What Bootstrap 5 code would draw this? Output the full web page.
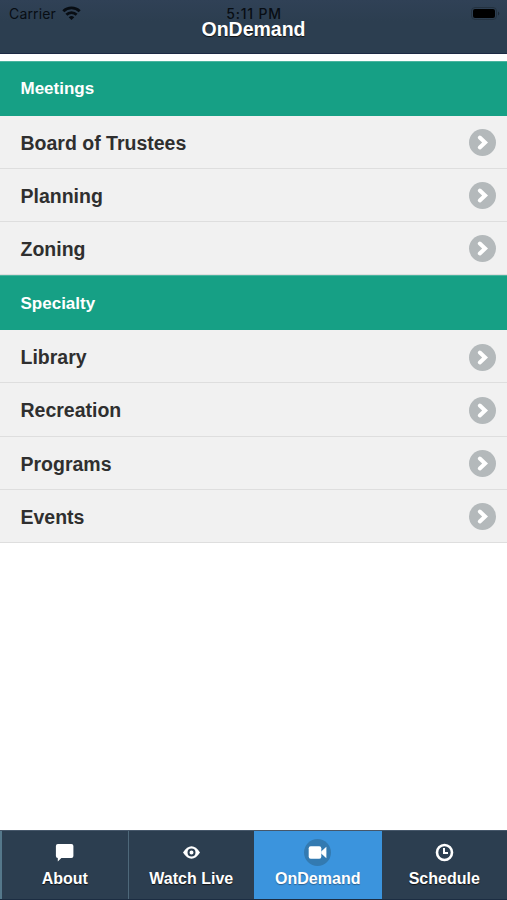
<!DOCTYPE html>
<html lang="en">
<head>
<meta charset="utf-8">
<meta name="viewport" content="width=device-width, initial-scale=1">
<title>OnDemand</title>
<link href="https://cdn.jsdelivr.net/npm/bootstrap@5.3.0/dist/css/bootstrap.min.css" rel="stylesheet">
<style>
body { font-family: "Liberation Sans", Arial, sans-serif; font-weight: 700; }
.app-header { height: 54px; background: linear-gradient(#304156, #2c3e50 40%); border-bottom: 1px solid #1d2a44; color: #fff; }
.status-bar { inset: 0 0 auto 0; height: 27px; padding: 0 7px 0 9px; font-family: Inter, "Liberation Sans", sans-serif; font-size: 14px; color: #080d13; }
.status-carrier { font-weight: 400; letter-spacing: .15px; }
.status-time { left: 1px; right: 0; font-weight: 500; letter-spacing: .8px; }
.wifi-icon { margin-left: 2px; }
.page-title { font-size: 19.5px; line-height: 22px; padding-top: 18px; text-shadow: 0 1px 1px #111; }
.section-list { margin-top: 6.5px; }
.section-heading { height: 55.2px; padding: 0 20.5px; background: #16a085; color: #fff; font-size: 17px; border-top: 1px solid #4ab49f; }
.section-row + .section-heading { padding-top: 1px; }
.section-row { height: 53.15px; padding: 1.6px 11px 0 20.5px; background: #f1f1f1; color: #2f2f2f; font-size: 19.5px; border-bottom: 1px solid #dedede; text-decoration: none; }
.section-row:hover { color: #2f2f2f; }
.section-row span { padding-top: 1.6px; }
.tab-bar { height: 70px; background: #2c3e50; border-top: 1px solid #46576a; border-bottom: 1px solid #1c2d42; }
.tab-item { color: #fff; font-size: 16px; line-height: 20px; padding-top: 8px; border-left: 1px solid #4e687a; text-decoration: none; text-shadow: 0 1px 1px #111; white-space: nowrap; }
.tab-item:first-child { border-left: 2px solid #55788b; }
.tab-item.active { background: #3b94dd; border-left-color: #3b94dd; text-shadow: 0 1px 1px #2b6090; }
.tab-item span { margin-top: 2.5px; }
.last-tab { border-left-color: #3b94dd; }
</style>
<script src="https://cdn.jsdelivr.net/npm/bootstrap@5.3.0/dist/js/bootstrap.bundle.min.js"></script>
</head>
<body class="vh-100 d-flex flex-column bg-white overflow-hidden">
<svg width="0" height="0" class="position-absolute" aria-hidden="true">
  <symbol id="chevron" viewBox="0 0 27 27"><circle cx="13.5" cy="13.5" r="13.5" fill="#b4b9bb"/><path d="M10.8 8.5l5.3 5-5.3 5" fill="none" stroke="#fff" stroke-width="4" stroke-linecap="round" stroke-linejoin="miter"/></symbol>
</svg>
<header class="app-header position-relative flex-shrink-0">
  <div class="status-bar position-absolute d-flex align-items-center justify-content-between">
    <div class="d-flex align-items-center gap-1">
      <span class="status-carrier">Carrier</span>
      <svg width="19" height="15" viewBox="0 0 19 15" class="wifi-icon"><g fill="none" stroke="#080d13" stroke-width="2.8"><path d="M1.3 5.3a11.7 11.7 0 0 1 16.4 0"/><path d="M4.4 8.8a7.2 7.2 0 0 1 10.2 0"/></g><path d="M6.7 11.3a4.1 4.1 0 0 1 5.6 0l-2.8 2.8z" fill="#080d13"/></svg>
    </div>
    <span class="status-time position-absolute text-center">5:11 PM</span>
    <svg width="29" height="13" viewBox="0 0 29 13"><rect x=".5" y=".5" width="25" height="12" rx="3.5" fill="none" stroke="#243240"/><rect x="2" y="2" width="22" height="9" rx="2" fill="#000"/><path d="M27 4.5a2.2 2.2 0 0 1 0 4z" fill="#1d2936"/></svg>
  </div>
  <h1 class="page-title position-relative text-center fw-bold m-0">OnDemand</h1>
</header>
<main class="flex-grow-1">
  <div class="section-list d-flex flex-column">
    <div class="section-heading d-flex align-items-center">Meetings</div>
    <a href="#" class="section-row d-flex align-items-center justify-content-between"><span>Board of Trustees</span><svg width="27" height="27"><use href="#chevron"/></svg></a>
    <a href="#" class="section-row d-flex align-items-center justify-content-between"><span>Planning</span><svg width="27" height="27"><use href="#chevron"/></svg></a>
    <a href="#" class="section-row d-flex align-items-center justify-content-between"><span>Zoning</span><svg width="27" height="27"><use href="#chevron"/></svg></a>
    <div class="section-heading d-flex align-items-center">Specialty</div>
    <a href="#" class="section-row d-flex align-items-center justify-content-between"><span>Library</span><svg width="27" height="27"><use href="#chevron"/></svg></a>
    <a href="#" class="section-row d-flex align-items-center justify-content-between"><span>Recreation</span><svg width="27" height="27"><use href="#chevron"/></svg></a>
    <a href="#" class="section-row d-flex align-items-center justify-content-between"><span>Programs</span><svg width="27" height="27"><use href="#chevron"/></svg></a>
    <a href="#" class="section-row d-flex align-items-center justify-content-between"><span>Events</span><svg width="27" height="27"><use href="#chevron"/></svg></a>
  </div>
</main>
<nav class="tab-bar row g-0 flex-shrink-0">
  <a href="#" class="tab-item col d-flex flex-column align-items-center">
    <svg width="27" height="27" viewBox="0 0 27 27"><path d="M6.9 5h13.5q2 0 2 2v10q0 2-2 2h-10l-3.6 3.4V19q-1.9 0-1.9-2V7q0-2 2-2z" fill="#fff"/></svg><span>About</span></a>
  <a href="#" class="tab-item col d-flex flex-column align-items-center">
    <svg width="27" height="27" viewBox="0 0 27 27"><path d="M5 13.5Q9 7.3 13.5 7.3T22 13.5Q18 19.7 13.5 19.7T5 13.5z" fill="#fff"/><circle cx="13.5" cy="13.5" r="3" fill="#fff" stroke="#2c3e50" stroke-width="2"/><circle cx="13.5" cy="13.5" r="1.1" fill="#fff"/></svg><span>Watch Live</span></a>
  <a href="#" class="tab-item active col d-flex flex-column align-items-center">
    <svg width="27" height="27" viewBox="0 0 27 27"><circle cx="13.5" cy="13.5" r="13.5" fill="#337ab1"/><rect x="4.7" y="7.2" width="12.6" height="12.6" rx="2" fill="#fff"/><path d="M17.2 12.5l5.2-4.8v11.6l-5.2-4.8z" fill="#fff"/></svg><span>OnDemand</span></a>
  <a href="#" class="tab-item last-tab col d-flex flex-column align-items-center">
    <svg width="27" height="27" viewBox="0 0 27 27" fill="none" stroke="#fff"><circle cx="13.5" cy="13.5" r="7.5" stroke-width="2.6"/><path d="M13 9v5h4" stroke-width="2"/></svg><span>Schedule</span></a>
</nav>
</body>
</html>
